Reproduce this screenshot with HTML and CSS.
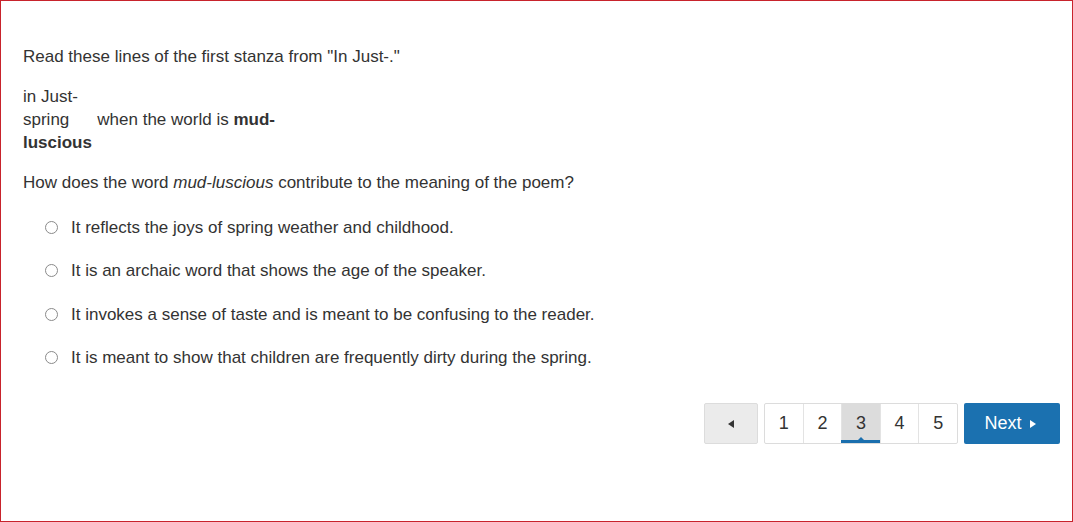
FILE: index.html
```html
<!DOCTYPE html>
<html>
<head>
<meta charset="utf-8">
<link rel="stylesheet" href="styles.css">
</head>
<body>
<div class="frame">
  <p class="intro">Read these lines of the first stanza from "In Just-."</p>
  <div class="poem">
    <div>in Just-</div>
    <div>spring<span class="tab">when the world is <b>mud-</b></span></div>
    <div><b>luscious</b></div>
  </div>
  <p class="question">How does the word <i>mud-luscious</i> contribute to the meaning of the poem?</p>
  <div class="options">
    <label class="option"><span class="radio"></span><span>It reflects the joys of spring weather and childhood.</span></label>
    <label class="option"><span class="radio"></span><span>It is an archaic word that shows the age of the speaker.</span></label>
    <label class="option"><span class="radio"></span><span>It invokes a sense of taste and is meant to be confusing to the reader.</span></label>
    <label class="option"><span class="radio"></span><span>It is meant to show that children are frequently dirty during the spring.</span></label>
  </div>
  <div class="pager">
    <button class="prev"><span class="tri-left"></span></button>
    <div class="pages">
      <span class="page">1</span>
      <span class="page">2</span>
      <span class="page active">3</span>
      <span class="page">4</span>
      <span class="page">5</span>
    </div>
    <button class="next">Next<span class="tri-right"></span></button>
  </div>
</div>
</body>
</html>
```
FILE: styles.css
```css
html, body {
  margin: 0;
  padding: 0;
  background: #fff;
}
.frame {
  box-sizing: border-box;
  width: 1073px;
  height: 522px;
  border: 1px solid #c8232c;
  padding: 44px 12px 0 22px;
  font-family: "Liberation Sans", Arial, sans-serif;
  font-size: 17px;
  line-height: 23px;
  color: #333;
}
p { margin: 0; }
.intro { margin-bottom: 17px; }
.poem { margin-bottom: 17px; }
.tab { margin-left: 28px; }
.question { margin-bottom: 22px; }
.options {
  display: flex;
  flex-direction: column;
  gap: 20.4px;
}
.option {
  display: flex;
  align-items: center;
  margin-left: 22px;
  gap: 13px;
}
.radio {
  box-sizing: border-box;
  width: 13px;
  height: 13px;
  border: 1px solid #8a8a8a;
  border-radius: 50%;
  background: #fff;
}
.pager {
  display: flex;
  justify-content: flex-end;
  gap: 6px;
  margin-top: 34px;
}
.prev {
  box-sizing: border-box;
  width: 54px;
  height: 41px;
  background: #ebebeb;
  border: 1px solid #dcdcdc;
  border-radius: 2px;
  display: flex;
  align-items: center;
  justify-content: center;
  padding: 0;
}
.tri-left {
  width: 0; height: 0;
  border-top: 4px solid transparent;
  border-bottom: 4px solid transparent;
  border-right: 6px solid #333;
}
.pages {
  display: flex;
  box-sizing: border-box;
  width: 194px;
  height: 41px;
  border: 1px solid #dcdcdc;
  border-radius: 2px;
  background: #fff;
}
.page {
  position: relative;
  flex: 1;
  box-sizing: border-box;
  height: 39px;
  display: flex;
  align-items: center;
  justify-content: center;
  font-size: 18px;
  border-left: 1px solid #e3e3e3;
}
.page:first-child { border-left: none; }
.page.active {
  background: #dcdcdc;
}
.page.active::after {
  content: "";
  position: absolute;
  left: -1px;
  right: -1px;
  bottom: 0;
  height: 3px;
  background: #1a6fae;
}
.page.active::before {
  content: "";
  position: absolute;
  left: 50%;
  bottom: 3px;
  margin-left: -3px;
  border-left: 3px solid transparent;
  border-right: 3px solid transparent;
  border-bottom: 3px solid #1a6fae;
}
.next {
  box-sizing: border-box;
  width: 96px;
  height: 41px;
  background: #1b71b0;
  border: none;
  border-radius: 2px;
  color: #fff;
  font-family: "Liberation Sans", Arial, sans-serif;
  font-size: 18px;
  display: flex;
  align-items: center;
  justify-content: center;
  gap: 8px;
  padding: 0 4px 0 0;
}
.tri-right {
  width: 0; height: 0;
  border-top: 4px solid transparent;
  border-bottom: 4px solid transparent;
  border-left: 6px solid #fff;
}
```
